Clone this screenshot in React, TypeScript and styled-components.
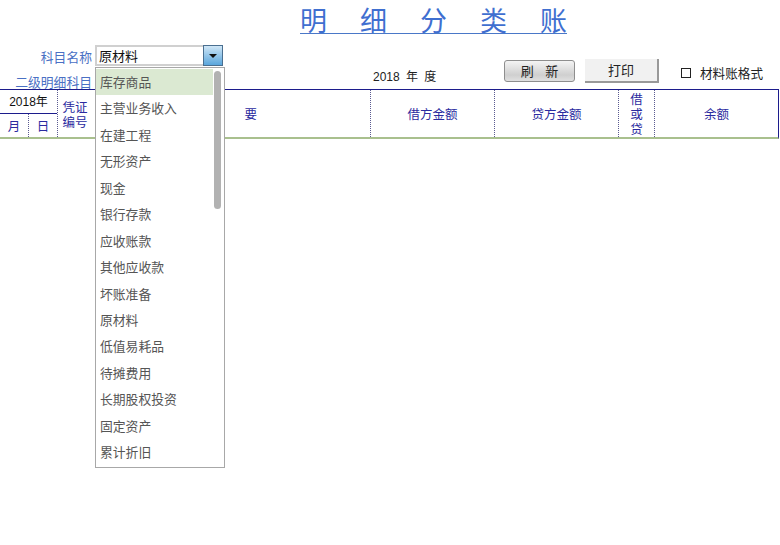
import React from "react";
import styled, { createGlobalStyle } from "styled-components";

const Global = createGlobalStyle`
  html, body { margin: 0; padding: 0; background: #fff; }
  body { font-family: "Liberation Sans", "Noto Sans CJK SC", sans-serif; font-size: 13px; }
`;
const Page = styled.div`
  position: relative; width: 780px; height: 545px; overflow: hidden; background: #fff;
  display: flex; flex-direction: column;
`;
const TitleRow = styled.div`
  height: 45px; flex: none; display: flex; justify-content: flex-start; padding-left: 300px; box-sizing: border-box;
`;
const Title = styled.h1`
  margin: 5px 0 0; height: 29px; width: 267px; box-sizing: border-box; border-bottom: 1px solid #4a78c8;
  color: #3f6fd0; font: 400 27px/30px "Noto Sans CJK SC", sans-serif;
  display: flex; justify-content: space-between; white-space: nowrap;
`;
const Toolbar = styled.div`
  height: 44px; display: flex; align-items: flex-start; flex: none;
`;
const NameBlock = styled.div`
  width: 224px; flex: none; display: flex; flex-direction: column;
`;
const NameRow = styled.div`
  display: flex; align-items: flex-start; height: 21px;
`;
const FieldLabel = styled.label<{ $top?: number }>`
  width: 92px; margin-top: ${p => p.$top ?? 0}px; text-align: right; color: #4a70c4;
  font: 12.8px/16px "Noto Sans CJK SC", sans-serif; white-space: nowrap; flex: none;
`;
const Select = styled.div`
  margin-left: 3px; width: 128px; height: 21px; box-sizing: border-box; border: 2px solid #d0d0d0; border-right: 0;
  display: flex; justify-content: space-between; background: #fff;
`;
const SelectText = styled.span`
  color: #111; font: 13px/17px "Noto Sans CJK SC", sans-serif; padding-left: 2px;
`;
const Arrow = styled.span`
  width: 20px; height: 21px; margin: -2px 0; box-sizing: border-box; border: 1px solid #4a6f90;
  background: linear-gradient(#cfe6f6, #5aa6dc); display: flex; align-items: center; justify-content: center;
  &::after { content: ""; border: 4px solid transparent; border-top: 4px solid #111; border-bottom: 0; }
`;
const YearText = styled.div`
  width: 131px; margin-top: 24px; padding-left: 149px; flex: none; white-space: pre;
  color: #222; font: 12px/16px "Liberation Sans", "Noto Sans CJK SC", sans-serif; word-spacing: 3px;
`;
const RefreshButton = styled.button`
  margin: 15px 0 0; padding: 0; width: 71px; height: 22px; box-sizing: border-box; flex: none;
  border: 1px solid #8e8e8e; border-radius: 3px; background: linear-gradient(#f4f4f4, #cfcfcf 70%, #e0e0e0);
  color: #222; font: 13px/18px "Noto Sans CJK SC", sans-serif; word-spacing: 1px; white-space: pre;
`;
const PrintButton = styled.button`
  margin: 14px 0 0 10px; padding: 0; width: 74px; height: 24px; box-sizing: border-box; flex: none;
  border: 0; border-right: 2px solid #999; border-bottom: 2px solid #999; background: #f1f1f1;
  color: #222; font: 13px/18px "Noto Sans CJK SC", sans-serif;
`;
const CheckLabel = styled.label`
  margin: 20px 0 0 22px; display: flex; align-items: center; gap: 9px; color: #222;
  font: 12.6px/16px "Noto Sans CJK SC", sans-serif; white-space: nowrap;
`;
const CheckBox = styled.span`
  width: 10px; height: 10px; box-sizing: border-box; border: 1px solid #222; background: #fff; flex: none;
`;
const Head = styled.div`
  width: 779px; height: 50px; box-sizing: border-box; flex: none;
  border-top: 1px solid #1c1c8c; border-right: 1px solid #1c1c8c; border-bottom: 2px solid #a9c08e;
  display: grid; grid-template-rows: 47px; grid-template-columns: 57px 39px 274px 124px 124px 36px 1fr;
`;
const Cell = styled.div<{ $first?: boolean }>`
  display: flex; align-items: center; justify-content: center; text-align: center; box-sizing: border-box;
  color: #2b2ba0; font: 12.5px/14px "Noto Sans CJK SC", sans-serif; min-height: 0;
  border-left: ${p => (p.$first ? "0" : "1px dotted #5a5a90")};
`;
const DateCell = styled.div`
  display: grid; grid-template-rows: 24px 23px; grid-template-columns: 28px 1fr;
`;
const YearHead = styled.div`
  grid-column: 1 / 3; display: flex; align-items: center; justify-content: center; color: #111;
  border-bottom: 1px solid #1c1c8c; font: 12px/14px "Liberation Sans", "Noto Sans CJK SC", sans-serif;
`;
const Stack = styled.span<{ $w: number; $lh: number; $shift?: number }>`
  display: block; width: ${p => p.$w}px; line-height: ${p => p.$lh}px; margin-right: ${p => p.$shift ?? 0}px;
`;
const Summary = styled.span`
  letter-spacing: 23px; margin-right: -23px;
`;
const Dropdown = styled.ul`
  position: absolute; left: 95px; top: 67px; width: 130px; height: 401px; box-sizing: border-box;
  margin: 0; padding: 1px 0 0; list-style: none; background: #fff; border: 1px solid #a8a8a8; overflow: hidden;
`;
const Option = styled.li<{ $active?: boolean }>`
  height: 26.45px; width: 117px; padding-left: 4px; box-sizing: border-box; color: #555;
  font: 12.8px/25.5px "Noto Sans CJK SC", sans-serif; background: ${p => (p.$active ? "#dbe9d2" : "transparent")};
`;
const Thumb = styled.span`
  position: absolute; left: 118px; top: 3px; width: 7px; height: 138px; border-radius: 4px; background: #b2b2b2;
`;
const items = ["库存商品","主营业务收入","在建工程","无形资产","现金","银行存款","应收账款","其他应收款","坏账准备","原材料","低值易耗品","待摊费用","长期股权投资","固定资产","累计折旧"];
export default function App() {
  return (
    <Page>
      <Global />
      <TitleRow><Title>{"明细分类账".split("").map(c => <span key={c}>{c}</span>)}</Title></TitleRow>
      <Toolbar>
        <NameBlock>
          <NameRow>
            <FieldLabel $top={4}>科目名称</FieldLabel>
            <Select><SelectText>原材料</SelectText><Arrow /></Select>
          </NameRow>
          <FieldLabel $top={8}>二级明细科目</FieldLabel>
        </NameBlock>
        <YearText>2018 年 度</YearText>
        <RefreshButton>{"刷   新"}</RefreshButton>
        <PrintButton>打印</PrintButton>
        <CheckLabel><CheckBox />材料账格式</CheckLabel>
      </Toolbar>
      <Head>
        <DateCell>
          <YearHead>2018年</YearHead>
          <Cell $first>月</Cell>
          <Cell>日</Cell>
        </DateCell>
        <Cell><Stack $w={28} $lh={15} $shift={4}>凭证编号</Stack></Cell>
        <Cell $first><Summary>摘要</Summary></Cell>
        <Cell>借方金额</Cell>
        <Cell>贷方金额</Cell>
        <Cell><Stack $w={14} $lh={15}>借或贷</Stack></Cell>
        <Cell>余额</Cell>
      </Head>
      <Dropdown>
        {items.map((t, i) => <Option key={t} $active={i === 0}>{t}</Option>)}
        <Thumb />
      </Dropdown>
    </Page>
  );
}
